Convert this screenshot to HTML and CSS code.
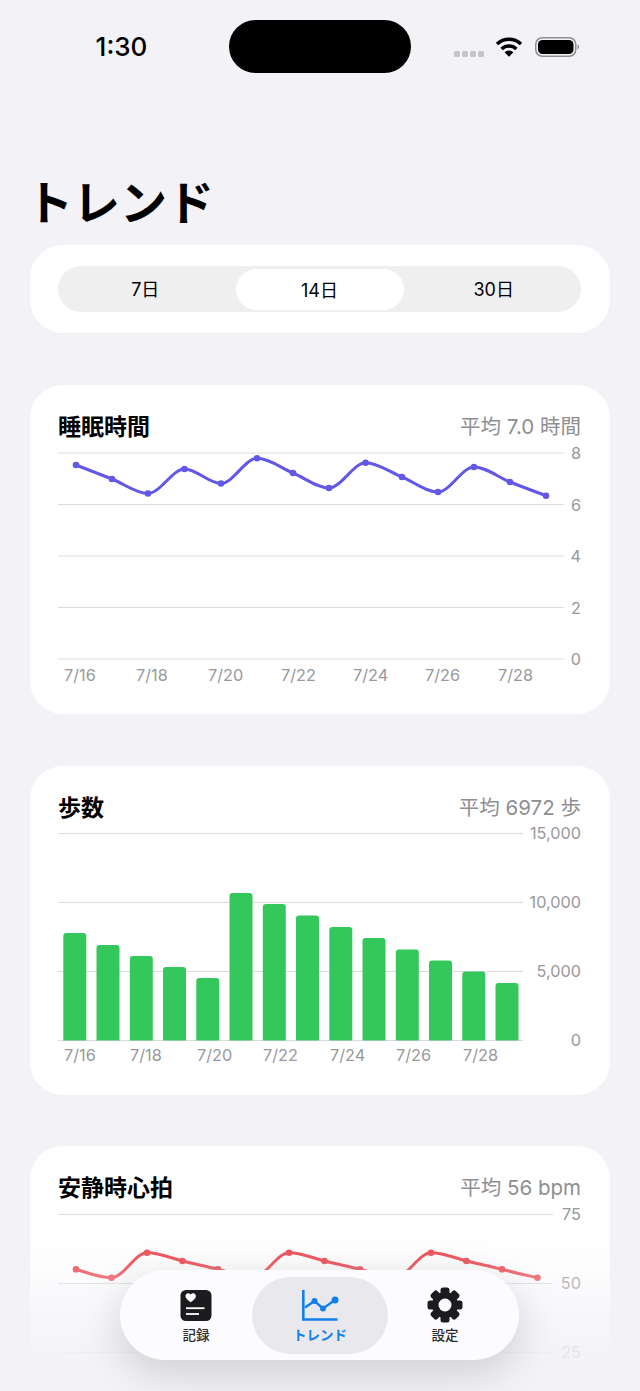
FILE: index.html
```html
<!DOCTYPE html>
<html lang="ja">
<head>
<meta charset="utf-8">
<title>トレンド</title>
<link rel="stylesheet" href="styles.css">
</head>
<body>
<div class="screen">
  <header class="status">
    <div class="status-time">1:30</div>
    <div class="island"></div>
    <div class="status-icons">
      <div class="signal"><i></i><i></i><i></i><i></i></div>
      <svg class="wifi" viewBox="0 0 28 21">
        <path class="wifi-arc" d="M2 8A17.5 17.5 0 0 1 26 8"/>
        <path class="wifi-arc" d="M6.6 13A10.8 10.8 0 0 1 21.4 13"/>
        <path class="wifi-fill" d="M9.6 16.2A6.4 6.4 0 0 1 18.4 16.2L14 20.8Z"/>
      </svg>
      <svg class="battery" viewBox="0 0 44 20">
        <rect class="bat-shell" x="0.75" y="0.75" width="40" height="18.5" rx="6.5"/>
        <rect class="bat-level" x="3" y="3" width="35.5" height="14" rx="4.5"/>
        <path class="bat-tip" d="M42.5 7.5c1.2.4 1.5 1.4 1.5 2.5s-.3 2.1-1.5 2.5z"/>
      </svg>
    </div>
  </header>

  <h1 class="title">トレンド</h1>

  <section class="card seg-card">
    <div class="seg">
      <div class="seg-item seg-first">7日</div>
      <div class="seg-item seg-active">14日</div>
      <div class="seg-item seg-last">30日</div>
    </div>
  </section>

  <section class="card chart-card">
    <div class="chart-head"><h2>睡眠時間</h2><span>平均 7.0 時間</span></div>
    <svg class="chart" viewBox="58 445 523 245">
      <line class="grid" x1="58" x2="564" y1="453" y2="453"/>
      <line class="grid" x1="58" x2="564" y1="504.5" y2="504.5"/>
      <line class="grid" x1="58" x2="564" y1="556" y2="556"/>
      <line class="grid" x1="58" x2="564" y1="607.5" y2="607.5"/>
      <line class="grid" x1="58" x2="564" y1="659" y2="659"/>
      <text class="axis end" x="581" y="459">8</text>
      <text class="axis end" x="581" y="511">6</text>
      <text class="axis end" x="581" y="562">4</text>
      <text class="axis end" x="581" y="614">2</text>
      <text class="axis end" x="581" y="665">0</text>
      <text class="axis" x="64" y="681">7/16</text>
      <text class="axis" x="136" y="681">7/18</text>
      <text class="axis" x="208" y="681">7/20</text>
      <text class="axis" x="281" y="681">7/22</text>
      <text class="axis" x="353" y="681">7/24</text>
      <text class="axis" x="425" y="681">7/26</text>
      <text class="axis" x="498" y="681">7/28</text>
      <path class="line line-sleep" d="M76 465C88 469.6 100 474.25 112 479C124 483.75 136 493.5 148 493.5C160 493.5 172.5 469 184.5 469C196.5 469 209 483.5 221 483.5C233 483.5 245 458.3 257 458.3C269 458.3 281 468 293 473C305 478 317 488 329 488C341 488 353.6 462.7 365.6 462.7C377.6 462.7 390 472.1 402 477C414 481.9 426 492 438 492C450 492 462 467 474 467C486 467 498 477.2 510 482C522 486.8 534 491.2 546 495.7"/>
      <g class="dots-sleep">
        <circle cx="76" cy="465" r="3.3"/><circle cx="112" cy="479" r="3.3"/><circle cx="148" cy="493.5" r="3.3"/>
        <circle cx="184.5" cy="469" r="3.3"/><circle cx="221" cy="483.5" r="3.3"/><circle cx="257" cy="458.3" r="3.3"/>
        <circle cx="293" cy="473" r="3.3"/><circle cx="329" cy="488" r="3.3"/><circle cx="365.6" cy="462.7" r="3.3"/>
        <circle cx="402" cy="477" r="3.3"/><circle cx="438" cy="492" r="3.3"/><circle cx="474" cy="467" r="3.3"/>
        <circle cx="510" cy="482" r="3.3"/><circle cx="546" cy="495.7" r="3.3"/>
      </g>
    </svg>
  </section>

  <section class="card chart-card">
    <div class="chart-head"><h2>歩数</h2><span>平均 6972 歩</span></div>
    <svg class="chart" viewBox="58 826 523 245">
      <line class="grid" x1="58" x2="523" y1="833.5" y2="833.5"/>
      <line class="grid" x1="58" x2="523" y1="902.5" y2="902.5"/>
      <line class="grid" x1="58" x2="523" y1="971.5" y2="971.5"/>
      <line class="grid" x1="58" x2="523" y1="1040.5" y2="1040.5"/>
      <text class="axis end" x="581" y="839">15,000</text>
      <text class="axis end" x="581" y="908">10,000</text>
      <text class="axis end" x="581" y="977">5,000</text>
      <text class="axis end" x="581" y="1046">0</text>
      <text class="axis" x="64" y="1061">7/16</text>
      <text class="axis" x="130" y="1061">7/18</text>
      <text class="axis" x="197" y="1061">7/20</text>
      <text class="axis" x="263" y="1061">7/22</text>
      <text class="axis" x="330" y="1061">7/24</text>
      <text class="axis" x="396" y="1061">7/26</text>
      <text class="axis" x="463" y="1061">7/28</text>
      <g class="bars">
        <path d="M63.3 1040.5V936q0-3 3-3h17q3 0 3 3v104.5z"/>
        <path d="M96.5 1040.5V948q0-3 3-3h17q3 0 3 3v92.5z"/>
        <path d="M129.8 1040.5V959q0-3 3-3h17q3 0 3 3v81.5z"/>
        <path d="M163 1040.5V970q0-3 3-3h17q3 0 3 3v70.5z"/>
        <path d="M196.3 1040.5V981q0-3 3-3h17q3 0 3 3v59.5z"/>
        <path d="M229.5 1040.5V896q0-3 3-3h17q3 0 3 3v144.5z"/>
        <path d="M262.8 1040.5V907q0-3 3-3h17q3 0 3 3v133.5z"/>
        <path d="M296 1040.5V918.5q0-3 3-3h17q3 0 3 3v122z"/>
        <path d="M329.3 1040.5V930q0-3 3-3h17q3 0 3 3v110.5z"/>
        <path d="M362.5 1040.5V941q0-3 3-3h17q3 0 3 3v99.5z"/>
        <path d="M395.8 1040.5V952.5q0-3 3-3h17q3 0 3 3v88z"/>
        <path d="M429 1040.5V963.5q0-3 3-3h17q3 0 3 3v77z"/>
        <path d="M462.3 1040.5V974.5q0-3 3-3h17q3 0 3 3v66z"/>
        <path d="M495.5 1040.5V986q0-3 3-3h17q3 0 3 3v54.5z"/>
      </g>
    </svg>
  </section>

  <section class="card chart-card chart-card-last">
    <div class="chart-head"><h2>安静時心拍</h2><span>平均 56 bpm</span></div>
    <svg class="chart" viewBox="58 1206 523 245">
      <line class="grid" x1="58" x2="553" y1="1214.5" y2="1214.5"/>
      <line class="grid" x1="58" x2="553" y1="1283.5" y2="1283.5"/>
      <line class="grid" x1="58" x2="553" y1="1352.5" y2="1352.5"/>
      <text class="axis end" x="581" y="1220">75</text>
      <text class="axis end" x="581" y="1289">50</text>
      <text class="axis end" x="581" y="1358">25</text>
      <path class="line line-heart" d="M76 1269.3C88 1273 99.5 1277.7 111.5 1277.7C123.5 1277.7 135 1252.7 147 1252.7C159 1252.7 170.5 1257.8 182.5 1261C194.5 1264.2 206 1266 218 1269.3C230 1272.6 241 1277.7 253 1277.7C265 1277.7 277 1252.7 289 1252.7C301 1252.7 312.5 1257.8 324.5 1261C336.5 1264.2 348 1266 360 1269.3C372 1272.6 383 1277.7 395 1277.7C407 1277.7 419 1252.7 431 1252.7C443 1252.7 454.5 1257.8 466.5 1261C478.5 1264.2 490 1266 502 1269.3C514 1272.6 525.5 1275 537.5 1277.7"/>
      <g class="dots-heart">
        <circle cx="76" cy="1269.3" r="3.3"/><circle cx="111.5" cy="1277.7" r="3.3"/><circle cx="147" cy="1252.7" r="3.3"/>
        <circle cx="182.5" cy="1261" r="3.3"/><circle cx="218" cy="1269.3" r="3.3"/><circle cx="289" cy="1252.7" r="3.3"/>
        <circle cx="324.5" cy="1261" r="3.3"/><circle cx="360" cy="1269.3" r="3.3"/><circle cx="431" cy="1252.7" r="3.3"/>
        <circle cx="466.5" cy="1261" r="3.3"/><circle cx="502" cy="1269.3" r="3.3"/><circle cx="537.5" cy="1277.7" r="3.3"/>
      </g>
    </svg>
  </section>

  <div class="fade"></div>

  <nav class="tabbar">
    <div class="tab">
      <svg class="tab-icon" viewBox="-3 -3 38 36">
        <rect class="ink" x="0.5" y="0" width="31" height="31" rx="5.5"/>
        <path class="paper" d="M10.700 12.200C7.900 10.200 5.500 8.400 5.500 6 5.500 4.400 6.700 3.200 8.200 3.200c1 0 2 .5 2.500 1.500C11.200 3.700 12.200 3.200 13.200 3.200 14.700 3.200 15.900 4.400 15.900 6c0 2.400-2.400 4.200-5.200 6.200z"/>
        <line class="paper-line" x1="6" x2="24.500" y1="18.200" y2="18.200"/>
        <line class="paper-line" x1="6" x2="19" y1="24" y2="24"/>
      </svg>
      <span>記録</span>
    </div>
    <div class="tab tab-active">
      <svg class="tab-icon" viewBox="0 -3 38 36">
        <path class="trend-axis" d="M2.300 0V29.500H36.500"/>
        <polyline class="trend-line" points="4,17.500 13.500,11 22,18.500 34,10"/>
        <circle class="trend-dot" cx="13.500" cy="11" r="3"/>
        <circle class="trend-dot" cx="22" cy="18.500" r="3"/>
        <circle class="trend-dot" cx="34" cy="10" r="3.500"/>
      </svg>
      <span>トレンド</span>
    </div>
    <div class="tab">
      <svg class="tab-icon" viewBox="-1 0 38 36">
        <g class="ink">
          <circle cx="18" cy="18" r="13"/>
          <rect x="13.500" y="0.500" width="9" height="35" rx="2.500"/>
          <rect x="13.500" y="0.500" width="9" height="35" rx="2.500" transform="rotate(45 18 18)"/>
          <rect x="13.500" y="0.500" width="9" height="35" rx="2.500" transform="rotate(90 18 18)"/>
          <rect x="13.500" y="0.500" width="9" height="35" rx="2.500" transform="rotate(135 18 18)"/>
        </g>
        <circle class="gear-hole" cx="18" cy="18" r="6.500"/>
      </svg>
      <span>設定</span>
    </div>
  </nav>
</div>
</body>
</html>
```

FILE: styles.css
```css
* { box-sizing: border-box; }
html, body { margin: 0; padding: 0; }
body {
  background: #f2f2f7;
  color: #000;
  font-family: Inter, "Noto Sans CJK JP", sans-serif;
}
.screen {
  position: relative;
  width: 640px;
  height: 1391px;
  overflow: hidden;
  padding: 0 30px;
}

/* status bar */
.status {
  display: flex;
  align-items: center;
  height: 53px;
  margin: 20px -30px 0;
}
.status-time {
  width: 229px;
  padding-left: 14px;
  text-align: center;
  font-size: 26px;
  font-weight: 500;
}
.island {
  width: 182px;
  height: 53px;
  border-radius: 27px;
  background: #000;
}
.status-icons {
  display: flex;
  align-items: center;
  margin-left: 43px;
}
.signal { display: flex; gap: 2px; margin-top: 15px; }
.signal i {
  width: 6px;
  height: 6px;
  border-radius: 1.5px;
  background: #c6c6ca;
}
.wifi { width: 28px; height: 21px; margin-left: 11px; }
.wifi-arc { fill: none; stroke: #000; stroke-width: 3.4; }
.wifi-fill { fill: #000; }
.battery { width: 44px; height: 20px; margin-left: 12px; }
.bat-shell { fill: none; stroke: #8f8f93; stroke-width: 1.5; }
.bat-level { fill: #000; }
.bat-tip { fill: #8f8f93; }

/* title */
.title {
  margin: 100px 0 12px -4px;
  height: 60px;
  font-size: 47px;
  line-height: 60px;
  font-weight: 600;
}

/* cards */
.card {
  background: #fff;
  border-radius: 33px;
}
.seg-card { padding: 21px 29px 21px 28px; height: 88px; }
.seg {
  display: grid;
  grid-template-columns: 1fr 168px 1fr;
  align-items: center;
  height: 46px;
  border-radius: 23px;
  background: #efeff0;
}
.seg-item { text-align: center; font-size: 18px; height: 46px; line-height: 48px; font-weight: 400; }
.seg-first { padding-right: 3px; }
.seg-last { padding-left: 3px; }
.seg-active {
  height: 41px;
  line-height: 43px;
  border-radius: 20.500px;
  background: #fff;
}

.chart-card {
  margin-top: 52px;
  height: 329px;
  padding: 25px 29px 24px 28px;
}
.chart-card-last { margin-top: 51px; height: 400px; }
.chart-head {
  display: flex;
  justify-content: space-between;
  align-items: center;
  height: 30px;
  margin-bottom: 5px;
}
.chart-head h2 {
  margin: 0;
  font-size: 23px;
  font-weight: 600;
}
.chart-head span {
  font-size: 20.500px;
  color: #8e8e93;
}
.chart {
  display: block;
  width: 523px;
  height: 245px;
  overflow: visible;
}
.grid { stroke: #dcdcde; stroke-width: 1; }
.axis {
  font-size: 16.250px;
  fill: #98989c;
}
.end { text-anchor: end; }
.line { fill: none; stroke-width: 3; stroke-linecap: round; stroke-linejoin: round; }
.line-sleep { stroke: #6257e6; }
.dots-sleep { fill: #6257e6; }
.line-heart { stroke: #f04850; }
.dots-heart { fill: #f04850; }
.bars { fill: #34c85c; }

/* bottom fade */
.fade {
  position: absolute;
  left: 0;
  right: 0;
  bottom: 0;
  height: 165px;
  background: linear-gradient(to bottom,
    rgba(242, 242, 247, 0) 0,
    rgba(242, 242, 247, 0.12) 36px,
    rgba(242, 242, 247, 0.35) 57px,
    rgba(242, 242, 247, 0.85) 126px,
    rgba(242, 242, 247, 0.95) 100%);
}

/* tab bar */
.tabbar {
  position: absolute;
  left: 120px;
  top: 1270px;
  width: 399px;
  height: 90px;
  display: grid;
  grid-template-columns: 112px 136px 114px;
  padding: 7px 17px 6px 20px;
  border-radius: 45px;
  background: #fcfcfe;
  box-shadow: 0 12px 44px rgba(0, 0, 0, 0.16);
}
.tab {
  display: flex;
  flex-direction: column;
  align-items: center;
  padding-top: 10px;
  border-radius: 38.500px;
  font-size: 13.500px;
  font-weight: 500;
  color: #2c2c2e;
}
.tab span { margin-top: 2px; line-height: 20px; }
.tab-icon { display: block; height: 36px; width: 38px; }
.tab-active { background: #e9e9ed; color: #1380ea; font-weight: 600; }
.ink { fill: #1c1c1e; }
.paper { fill: #fff; }
.paper-line { stroke: #fff; stroke-width: 1.800; }
.trend-axis { fill: none; stroke: #1380ea; stroke-width: 2.600; }
.trend-line { fill: none; stroke: #1380ea; stroke-width: 2.400; }
.trend-dot { fill: #1380ea; }
.gear-hole { fill: #fcfcfe; }
```
